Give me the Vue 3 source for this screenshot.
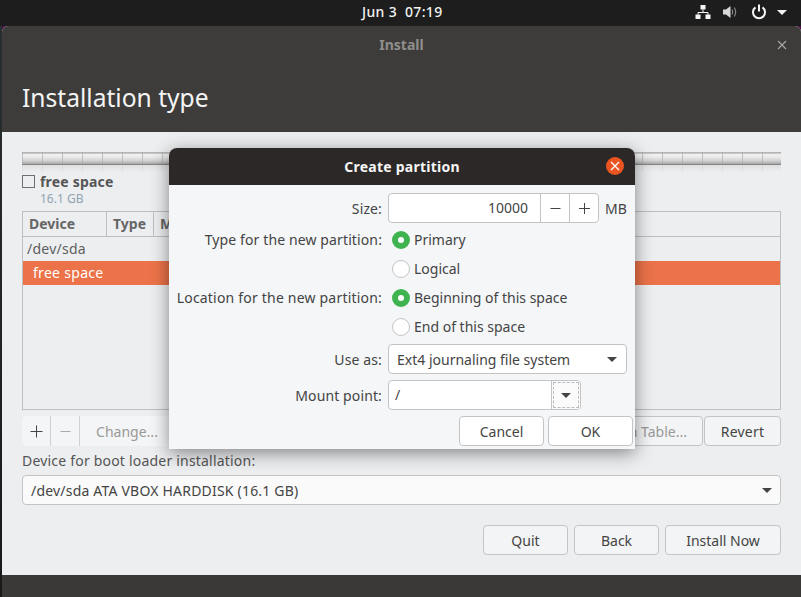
<script setup>
</script>

<template>
  <div class="screen">
    <header class="topbar">
      <div class="clock">Jun 3&nbsp;&nbsp;07:19</div>
      <div class="tray">
        <svg class="ic net" width="16" height="14" viewBox="0 0 16 14"><path fill="#f5f5f5" d="M5.5 0h5v4.5h-5zM0.5 9.5h5V14h-5zM10.5 9.5h5V14h-5z"/><path fill="none" stroke="#f5f5f5" d="M8 4.5v3M3 9.5V7.5h10v2"/></svg>
        <svg class="ic vol" width="15" height="14" viewBox="0 0 15 14"><path fill="#d8d8d8" d="M0 4.5h3L7.5 1v12L3 9.5H0z"/><path fill="none" stroke="#9a9a9a" d="M9 4.5q1.6 2.5 0 5M11.5 2.5q2.6 4.5 0 9"/></svg>
        <svg class="ic pow" width="16" height="16" viewBox="0 0 16 16"><path fill="none" stroke="#f5f5f5" stroke-width="2" d="M4.5 3.4a6 6 0 1 0 7 0"/><path stroke="#f5f5f5" stroke-width="2" d="M8 0.5v7"/></svg>
        <span class="tri light"></span>
      </div>
    </header>

    <div class="shell">
      <div class="window">
        <div class="win-head">
          <div class="win-title">Install</div>
          <svg class="win-x" width="10" height="10" viewBox="0 0 10 10"><path stroke="#a8a8a6" stroke-width="1.1" d="M1 1l8 8M9 1l-8 8"/></svg>
          <h1>Installation type</h1>
        </div>

        <main class="content">
          <div class="ruler"></div>
          <div class="legend">
            <span class="check"></span>
            <div>
              <div class="leg-name">free space</div>
              <div class="leg-size">16.1 GB</div>
            </div>
          </div>

          <div class="table">
            <div class="thead">
              <div class="th c1">Device</div>
              <div class="th c2">Type</div>
              <div class="th c3">Mount point</div>
            </div>
            <div class="row">/dev/sda</div>
            <div class="row selected">free space</div>
          </div>

          <div class="toolbar">
            <div class="tool-group">
              <span class="tool"><svg width="13" height="13" viewBox="0 0 13 13"><path stroke="#444" d="M6.5 0.5v12M0.5 6.5h12"/></svg></span>
              <span class="tool"><svg width="13" height="13" viewBox="0 0 13 13"><path stroke="#aaa" d="M1.5 6.5h10"/></svg></span>
              <span class="tool wide">Change...</span>
            </div>
            <div class="tool-right">
              <button class="btn flat disabled">New Partition Table...</button>
              <button class="btn flat revert">Revert</button>
            </div>
          </div>

          <div class="boot-label">Device for boot loader installation:</div>
          <div class="select boot"><span>/dev/sda ATA VBOX HARDDISK (16.1 GB)</span><span class="tri"></span></div>

          <div class="actions">
            <button class="btn flat act">Quit</button>
            <button class="btn flat act">Back</button>
            <button class="btn flat act inst">Install Now</button>
          </div>
        </main>

        <div class="win-foot"></div>
      </div>
    </div>

    <section class="dialog">
      <div class="dlg-head">
        <span>Create partition</span>
        <span class="dlg-close"><svg width="10" height="10" viewBox="0 0 10 10"><path stroke="#fff" stroke-width="1.3" d="M1 1l8 8M9 1l-8 8"/></svg></span>
      </div>
      <div class="dlg-body">
        <div class="form-row h30">
          <label>Size:</label>
          <div class="spin">
            <span class="spin-val">10000</span>
            <span class="spin-b"><svg width="11" height="11" viewBox="0 0 11 11"><path stroke="#444" d="M0.5 5.5h10"/></svg></span>
            <span class="spin-b"><svg width="11" height="11" viewBox="0 0 11 11"><path stroke="#444" d="M5.5 0v11M0 5.5h11"/></svg></span>
          </div>
          <span class="unit">MB</span>
        </div>
        <div class="form-row radio-row first">
          <label>Type for the new partition:</label>
          <span class="radio on"></span><span class="radio-t">Primary</span>
        </div>
        <div class="form-row radio-row">
          <label></label>
          <span class="radio"></span><span class="radio-t">Logical</span>
        </div>
        <div class="form-row radio-row">
          <label class="wide-label">Location for the new partition:</label>
          <span class="radio on"></span><span class="radio-t">Beginning of this space</span>
        </div>
        <div class="form-row radio-row">
          <label></label>
          <span class="radio"></span><span class="radio-t">End of this space</span>
        </div>
        <div class="form-row h30 use">
          <label>Use as:</label>
          <div class="select fs"><span>Ext4 journaling file system</span><span class="tri"></span></div>
        </div>
        <div class="form-row h30 mount">
          <label>Mount point:</label>
          <div class="combo">
            <span class="combo-val">/</span>
            <span class="combo-b"><span class="combo-focus"><span class="tri"></span></span></span>
          </div>
        </div>
        <div class="dlg-actions">
          <button class="btn dlg">Cancel</button>
          <button class="btn dlg">OK</button>
        </div>
      </div>
    </section>
  </div>
</template>

<style>
html, body { margin: 0; padding: 0; overflow: hidden; }
</style>

<style scoped>
.screen {
  position: relative;
  width: 801px;
  height: 597px;
  overflow: hidden;
  background: linear-gradient(#2a3032, #191919);
  font-family: "Noto Sans", sans-serif;
  font-size: 14px;
  color: #444;
  display: flex;
  flex-direction: column;
}
.topbar {
  height: 26px;
  flex: none;
  background: #1d1d1d;
  position: relative;
  display: flex;
  justify-content: flex-end;
}
.clock {
  position: absolute;
  left: 362px;
  top: 3px;
  color: #f2f2f2;
  font-size: 14px;
  line-height: 18px;
  font-weight: 500;
  letter-spacing: .35px;
  white-space: nowrap;
}
.tray { display: flex; align-items: center; height: 24px; margin-right: 14px; }
.ic { display: block; flex: none; }
.net { margin-right: 12px; }
.vol { margin-right: 13px; }
.pow { margin-right: 10px; }
.tri {
  display: inline-block;
  width: 0; height: 0;
  border-left: 5px solid transparent;
  border-right: 5px solid transparent;
  border-top: 5px solid #444;
}
.tri.light { border-top-color: #f2f2f2; }

.shell {
  flex: 1;
  min-height: 0;
  margin-left: 2px;
  display: flex;
  background: linear-gradient(#4b0f44 0 6px, transparent 6px);
}
.window {
  flex: 1;
  background: #edeef0;
  border-radius: 6px 6px 0 0;
  overflow: hidden;
  display: flex;
  flex-direction: column;
}
.win-head {
  height: 106px;
  flex: none;
  background: #3d3c3a;
  position: relative;
}
.win-title {
  text-align: center;
  padding-top: 9px;
  line-height: 20px;
  font-weight: 700;
  font-size: 14px;
  color: #8f8f8d;
}
.win-x { position: absolute; right: 14px; top: 14px; }
h1 {
  margin: 0;
  position: absolute;
  left: 20px;
  top: 56px;
  font-size: 24.6px;
  line-height: 32px;
  font-weight: 400;
  color: #f4f4f4;
}
.content { flex: 1; padding: 20px 20px 0; min-height: 0; }
.ruler {
  height: 20px;
  width: 759px;
  background:
    repeating-linear-gradient(90deg, rgba(165,165,165,.6) 0 1px, transparent 1px 20px) 0 0 / 100% 12px no-repeat,
    repeating-linear-gradient(90deg, rgba(190,190,190,.2) 0 1px, transparent 1px 20px) 0 13px / 100% 7px no-repeat,
    linear-gradient(#b4b4b4 0 1px, #c8c8c8 1px 2px, #f0f0f0 2px, #ebebeb 5px, #cfcfcf 9px, #a6a6a6 12px, #858585 12px 13px, #dedfe1 13px, #edeef0 20px);
}
.legend { display: flex; gap: 5px; margin-top: 3px; height: 36px; }
.check {
  width: 11px; height: 11px;
  border: 1px solid #6f6f6f;
  flex: none;
}
.leg-name { font-weight: 700; font-size: 14px; line-height: 18px; color: #555; margin-top: -2px; letter-spacing: .2px; }
.leg-size { font-size: 12px; line-height: 16px; color: #8fa4b2; }
.table {
  height: 199px;
  width: 759px;
  box-sizing: border-box;
  border: 1px solid #bdbfc2;
  background: #edeef0;
}
.thead { display: flex; height: 25px; box-sizing: border-box; border-bottom: 1px solid #bdbfc2; }
.th {
  box-sizing: border-box;
  font-weight: 700;
  font-size: 14px;
  line-height: 24px;
  padding-left: 6px;
  color: #666;
  border-right: 1px solid #bdbfc2;
  white-space: nowrap;
}
.c1 { width: 84px; }
.c2 { width: 47px; }
.c3 { width: 100px; }
.row { height: 24px; line-height: 24px; padding-left: 4px; color: #5e5e5e; letter-spacing: .25px; }
.selected { background: #ec7349; color: #fff; padding-left: 10px; letter-spacing: .3px; }
.toolbar {
  display: flex;
  justify-content: space-between;
  margin-top: 6px;
  height: 30px;
  width: 759px;
}
.tool-group { display: flex; background: #f4f5f6; border-radius: 5px; width: 160px; }
.tool {
  box-sizing: border-box;
  width: 29px;
  flex: none;
  display: flex;
  align-items: center;
  justify-content: center;
  border-right: 1px solid #cfd1d4;
}
.tool.wide { width: 94px; border: 0; color: #999; }
.tool-right { display: flex; gap: 1px; }
.btn {
  box-sizing: border-box;
  font: inherit;
  color: #444;
  padding: 0;
  border: 1px solid #c2c4c6;
  border-radius: 4px;
  background: #fff;
  white-space: nowrap;
}
.btn.flat { background: #f3f4f5; }
.disabled { width: 180px; color: #999; text-align: right; padding-right: 15px; overflow: hidden; }
.revert { width: 77px; letter-spacing: .2px; }
.boot-label { margin-top: 6px; line-height: 18px; height: 20px; margin-bottom: 3px; color: #555; letter-spacing: .2px; }
.select {
  box-sizing: border-box;
  display: flex;
  align-items: center;
  justify-content: space-between;
  height: 30px;
  background: #fafafa;
  border: 1px solid #c2c4c6;
  border-radius: 4px;
  padding: 0 8px;
  color: #444;
}
.boot { width: 759px; letter-spacing: .2px; }
.actions { display: flex; justify-content: flex-end; gap: 6px; margin-top: 20px; width: 759px; }
.act { width: 85px; height: 30px; }
.inst { width: 116px; }
.win-foot { height: 22px; flex: none; background: #3a3937; }

.dialog {
  position: absolute;
  left: 169px;
  top: 148px;
  width: 466px;
  height: 301px;
  background: #f4f6f8;
  border-radius: 8px 8px 0 0;
  box-shadow: 0 4px 18px rgba(0,0,0,.45);
  overflow: hidden;
}
.dlg-head {
  height: 37px;
  background: #2c2828;
  color: #f5f5f5;
  font-weight: 700;
  font-size: 14px;
  line-height: 37px;
  letter-spacing: .25px;
  text-align: center;
  position: relative;
}
.dlg-close {
  position: absolute;
  right: 11px;
  top: 9px;
  width: 18px;
  height: 18px;
  border-radius: 50%;
  background: #e95420;
  display: flex;
  align-items: center;
  justify-content: center;
}
.dlg-body { padding-top: 8px; }
.form-row { display: flex; align-items: center; }
.form-row label {
  box-sizing: border-box;
  width: 213px;
  text-align: right;
  white-space: nowrap;
  flex: none;
  color: #444;
  margin-right: 6px;
  letter-spacing: .12px;
}
.form-row label.wide-label { letter-spacing: .2px; }
.h30 { height: 30px; }
.radio-row { height: 29px; }
.radio-row.first { margin-top: 2px; }
.radio {
  box-sizing: border-box;
  width: 18px; height: 18px;
  border-radius: 50%;
  background: #fff;
  border: 1px solid #c2c4c6;
  margin-left: 4px;
  margin-right: 4px;
  flex: none;
}
.radio.on {
  border: 6px solid #3eb34f;
  background: #fff;
}
.radio-t { color: #444; white-space: nowrap; }
.spin {
  box-sizing: border-box;
  display: flex;
  width: 211px;
  height: 30px;
  background: #fff;
  border: 1px solid #c2c4c6;
  border-radius: 4px;
}
.spin-val { flex: 1; text-align: right; line-height: 28px; padding-right: 12px; }
.spin-b {
  box-sizing: border-box;
  width: 29px;
  flex: none;
  border-left: 1px solid #c2c4c6;
  display: flex; align-items: center; justify-content: center;
}
.unit { margin-left: 6px; }
.use { margin-top: 3px; }
.fs { width: 239px; background: #fff; padding-right: 9px; }
.mount { margin-top: 6px; }
.combo {
  box-sizing: border-box;
  display: flex;
  width: 193px;
  height: 30px;
  background: #fff;
  border: 1px solid #c2c4c6;
  border-radius: 4px;
}
.combo-val { flex: 1; line-height: 28px; padding-left: 6px; border-right: 1px solid #c2c4c6; }
.combo-b { width: 28px; flex: none; display: flex; padding: 1px; box-sizing: border-box; background: #fbfbfb; border-radius: 0 3px 3px 0; }
.combo-focus {
  flex: 1;
  border: 1px dashed #bdbdbd;
  display: flex; align-items: center; justify-content: center;
}
.dlg-actions { display: flex; justify-content: flex-end; gap: 4px; margin-top: 6px; padding-right: 2px; }
.dlg { width: 85px; height: 30px; }
</style>
